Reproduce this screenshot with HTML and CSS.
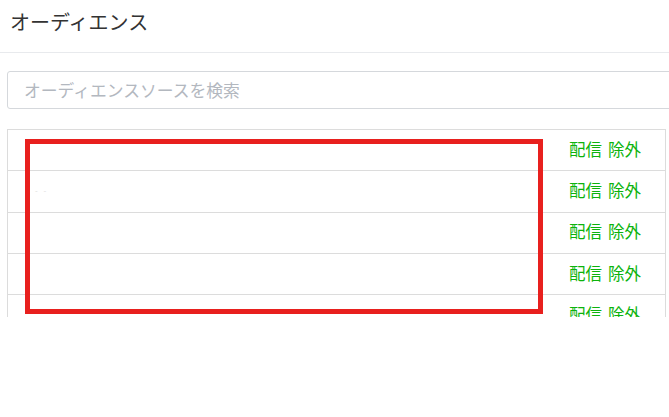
FILE: index.html
```html
<!DOCTYPE html>
<html lang="ja">
<head>
<meta charset="utf-8">
<title>オーディエンス</title>
<link rel="stylesheet" href="styles.css">
</head>
<body>
<header class="header">
  <h1 class="title">オーディエンス</h1>
</header>
<main class="content">
  <div class="search">オーディエンスソースを検索</div>
  <ul class="list">
    <li class="row"><span class="name"></span><span class="actions"><a class="act">配信</a><a class="act">除外</a></span></li>
    <li class="row"><span class="name faint">- -</span><span class="actions"><a class="act">配信</a><a class="act">除外</a></span></li>
    <li class="row"><span class="name"></span><span class="actions"><a class="act">配信</a><a class="act">除外</a></span></li>
    <li class="row"><span class="name"></span><span class="actions"><a class="act">配信</a><a class="act">除外</a></span></li>
    <li class="row"><span class="name"></span><span class="actions"><a class="act">配信</a><a class="act">除外</a></span></li>
  </ul>
</main>
<div class="highlight"></div>
</body>
</html>
```
FILE: styles.css
```css
html, body {
  margin: 0;
  padding: 0;
  background: #ffffff;
  font-family: "Noto Sans CJK JP", "Noto Sans", sans-serif;
  overflow: hidden;
}

.header {
  box-sizing: border-box;
  height: 53px;
  padding: 0 0 9px 10px;
  display: flex;
  align-items: center;
  border-bottom: 1px solid #e8eaed;
}

.title {
  margin: 0;
  font-size: 20px;
  font-weight: 400;
  color: #333333;
  line-height: 1;
}

.content {
  padding: 18px 0 0 7px;
}

.search {
  width: 680px;
  height: 38px;
  box-sizing: border-box;
  border: 1px solid #d5d8dc;
  border-radius: 3px;
  padding-left: 16px;
  display: flex;
  align-items: center;
  font-size: 16.8px;
  color: #b3b8bf;
}

.list {
  list-style: none;
  margin: 20px 0 0 0;
  padding: 0;
  width: 659px;
  height: 188px;
  box-sizing: border-box;
  border: 1px solid #dcdcdc;
  border-bottom: none;
  overflow: hidden;
}

.row {
  height: 41.3px;
  box-sizing: border-box;
  border-bottom: 1px solid #dcdcdc;
  display: flex;
  align-items: center;
  justify-content: space-between;
  padding: 0 24px 2px 27px;
}

.name {
  font-size: 8px;
  color: #dddddd;
  letter-spacing: 2px;
}

.actions {
  display: flex;
  gap: 6px;
}

.act {
  font-size: 16.5px;
  color: #0cb30c;
  line-height: 1;
  cursor: pointer;
}

.highlight {
  position: absolute;
  left: 25px;
  top: 139px;
  width: 518px;
  height: 175px;
  box-sizing: border-box;
  border: 5px solid #e8201e;
}
```
